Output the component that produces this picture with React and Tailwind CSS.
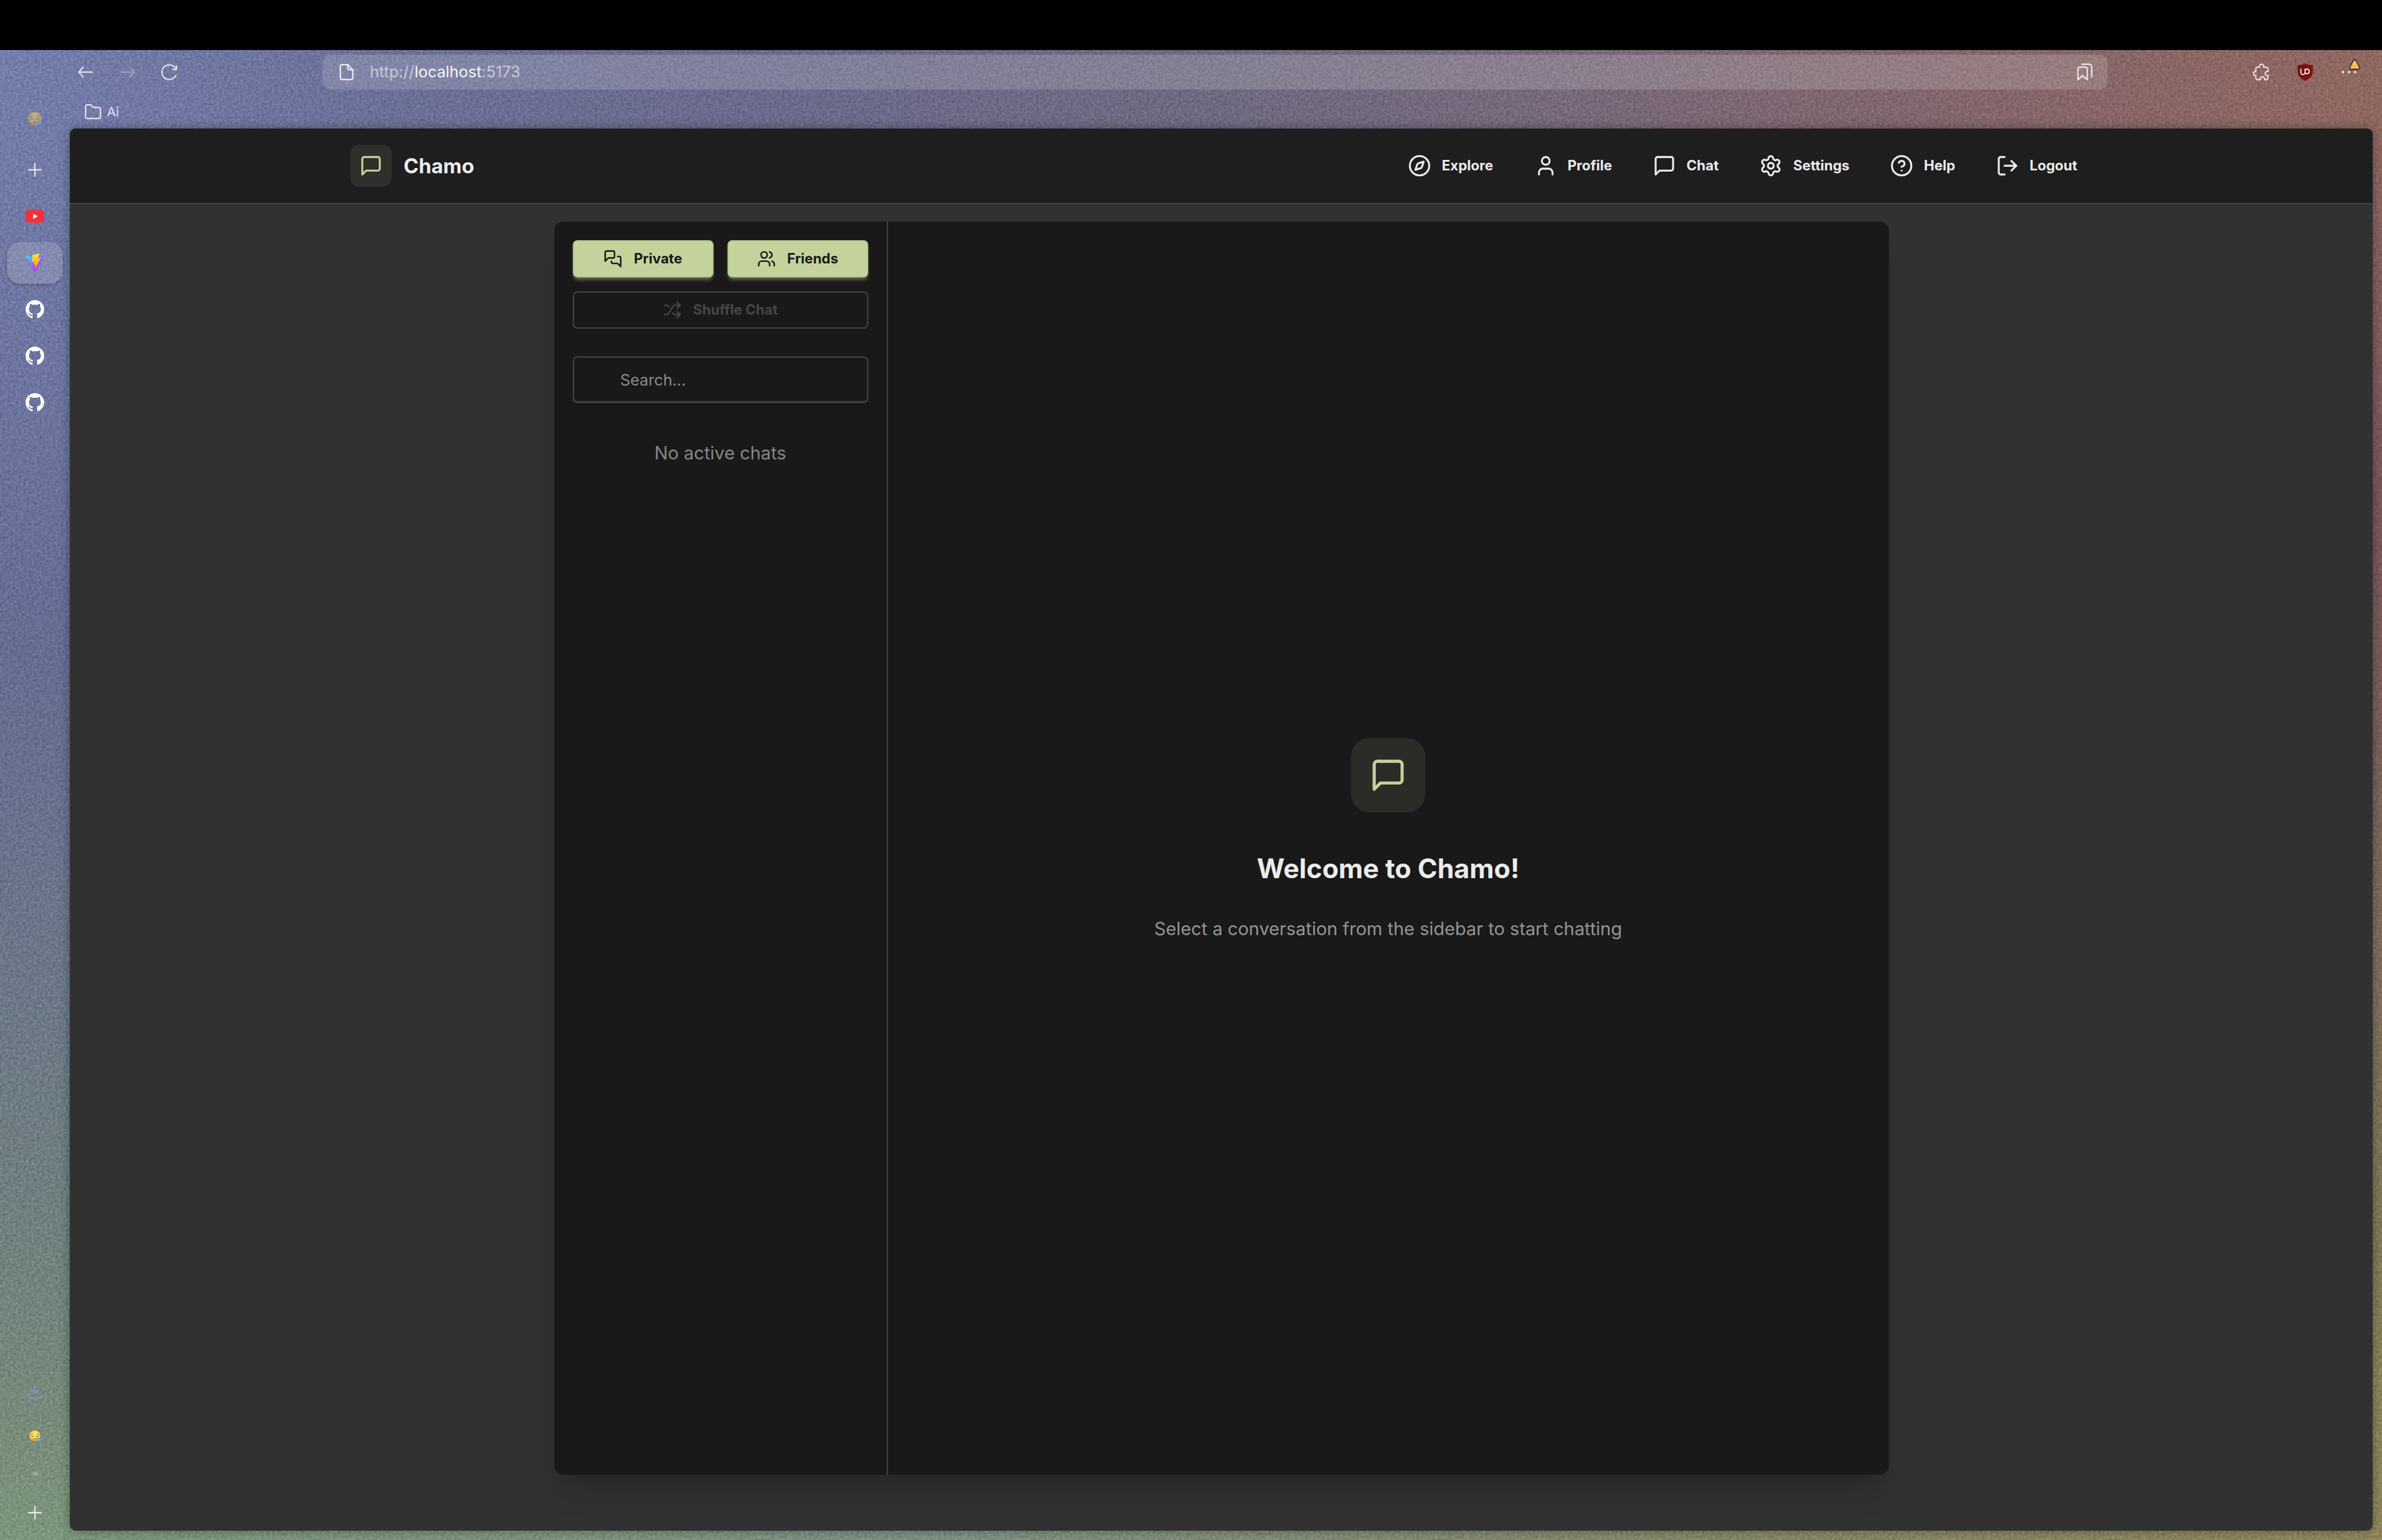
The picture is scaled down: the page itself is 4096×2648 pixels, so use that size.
import { CircleQuestionMark, Compass, LogOut, Settings, Shuffle, User, Users } from "lucide-react";

const line = { fill: "none", stroke: "currentColor", strokeLinecap: "round", strokeLinejoin: "round" };

function Bubble({ className }) {
  return (
    <svg viewBox="0 0 24 24" className={className} strokeWidth="2" {...line} aria-hidden="true">
      <path d="M21 15a2 2 0 0 1-2 2H7l-4 4V5a2 2 0 0 1 2-2h14a2 2 0 0 1 2 2z" />
    </svg>
  );
}

function Bubbles({ className }) {
  return (
    <svg viewBox="0 0 24 24" className={className} strokeWidth="2" {...line} aria-hidden="true">
      <path d="M14 9a2 2 0 0 1-2 2H6l-4 4V4a2 2 0 0 1 2-2h8a2 2 0 0 1 2 2z" />
      <path d="M18 9h2a2 2 0 0 1 2 2v11l-4-4h-6a2 2 0 0 1-2-2v-1" />
    </svg>
  );
}

function Backdrop() {
  return (
    <div className="absolute inset-0 -z-10" aria-hidden="true">
      <div className="absolute inset-0 bg-[linear-gradient(90deg,#747dab_0%,#6b7098_16%,#6a6a8a_33%,#6e6980_50%,#77687a_66%,#80666d_80%,#8c6662_95%,#8f6860_100%)]" />
      <div className="absolute inset-y-0 left-0 w-40 bg-[linear-gradient(180deg,#747dab_0%,#6c749f_25%,#656c92_42%,#6a7589_60%,#70807f_80%,#778a79_92%,#7c957b_100%)] [mask-image:linear-gradient(180deg,transparent_4%,black_16%)]" />
      <div className="absolute inset-y-0 right-0 w-10 bg-[linear-gradient(180deg,#8f6860_0%,#85605f_15%,#785558_33%,#78605a_48%,#7d6c5b_62%,#7d7656_78%,#878258_90%,#8d8459_100%)] [mask-image:linear-gradient(180deg,transparent_4%,black_16%)]" />
      <div className="absolute inset-x-0 bottom-0 h-5 bg-[linear-gradient(90deg,#7c957b_0%,#7d9080_40%,#84876a_70%,#8d8459_100%)]" />
      <svg className="absolute inset-0 size-full opacity-15 mix-blend-overlay">
        <filter id="grain" x="0" y="0" width="100%" height="100%" colorInterpolationFilters="sRGB">
          <feTurbulence type="fractalNoise" baseFrequency="0.22" numOctaves="2" seed="4" />
          <feColorMatrix values="1.5 0 0 0 -0.25  1.5 0 0 0 -0.25  1.5 0 0 0 -0.25  0 0 0 0 1" />
        </filter>
        <rect width="100%" height="100%" filter="url(#grain)" />
      </svg>
    </div>
  );
}

function SadFace({ className }) {
  return (
    <svg viewBox="0 0 24 24" className={className} aria-hidden="true">
      <defs>
        <radialGradient id="face" cx="0.5" cy="0.35" r="0.65">
          <stop offset="0" stopColor="#fff07a" />
          <stop offset="0.65" stopColor="#f8cf45" />
          <stop offset="1" stopColor="#dd8a2b" />
        </radialGradient>
      </defs>
      <circle cx="12" cy="12" r="11.5" fill="url(#face)" />
      <g fill="none" stroke="#7a4a1c" strokeWidth="1.2" strokeLinecap="round">
        <path d="M5 12.2c1.2 1.2 3.4 1.2 4.6 0M14.4 12.2c1.2 1.2 3.4 1.2 4.6 0" />
        <path d="M3.8 9c1.6-.1 2.8-.7 3.6-1.8M20.2 9c-1.6-.1-2.8-.7-3.6-1.8" />
        <path d="M8.6 18.4c1.8-1.2 4.4-1.2 6 0" />
      </g>
      <path d="M15 17c2-2.4 7.500-2 8 1.500.4 3-2 5-4.500 4.500-3-.6-4.300-3-3.500-6z" fill="#5fb6ee" />
    </svg>
  );
}

function YouTubeMark() {
  return (
    <svg viewBox="0 0 32 22" className="w-8" aria-hidden="true">
      <rect width="32" height="22" rx="5" fill="#ee333e" />
      <path d="M13 6.500v9l8-4.500z" fill="#fff" />
    </svg>
  );
}

function ViteMark() {
  return (
    <svg viewBox="0 0 256 257" className="w-8" aria-hidden="true">
      <defs>
        <linearGradient id="viteA" x1="-.828%" x2="57.636%" y1="7.652%" y2="78.411%">
          <stop offset="0%" stopColor="#41D1FF" />
          <stop offset="100%" stopColor="#BD34FE" />
        </linearGradient>
        <linearGradient id="viteB" x1="43.376%" x2="50.316%" y1="2.242%" y2="89.030%">
          <stop offset="0%" stopColor="#FFEA83" />
          <stop offset="8.333%" stopColor="#FFDD35" />
          <stop offset="100%" stopColor="#FFA800" />
        </linearGradient>
      </defs>
      <path fill="url(#viteA)" d="M255.153 37.938L134.897 252.976c-2.483 4.440-8.862 4.466-11.382.048L.875 37.958c-2.746-4.814 1.371-10.646 6.827-9.670l120.385 21.517a6.537 6.537 0 0 0 2.322-.004l117.867-21.483c5.438-.991 9.574 4.796 6.877 9.620Z" />
      <path fill="url(#viteB)" d="M185.432.063L96.440 17.501a3.268 3.268 0 0 0-2.634 3.014l-5.474 92.456a3.268 3.268 0 0 0 3.997 3.378l24.777-5.718c2.318-.535 4.413 1.507 3.936 3.838l-7.361 36.047c-.495 2.426 1.782 4.500 4.151 3.780l15.304-4.649c2.372-.720 4.652 1.360 4.150 3.788l-11.698 56.621c-.732 3.542 3.979 5.473 5.943 2.437l1.313-2.028l72.516-144.720c1.215-2.423-.880-5.186-3.540-4.672l-25.505 4.922c-2.396.462-4.435-1.770-3.759-4.114l16.646-57.705c.677-2.350-1.370-4.583-3.769-4.113Z" />
    </svg>
  );
}

function GitHubMark() {
  return (
    <svg viewBox="0 0 16 16" className="w-8 text-white" fill="currentColor" aria-hidden="true">
      <path d="M8 0C3.580 0 0 3.580 0 8c0 3.540 2.290 6.530 5.470 7.590.4.070.550-.170.550-.380 0-.190-.010-.820-.010-1.490-2.010.370-2.530-.490-2.690-.940-.090-.230-.480-.940-.820-1.130-.280-.150-.680-.520-.010-.530.630-.010 1.080.580 1.230.820.720 1.210 1.870.870 2.330.660.070-.520.280-.870.510-1.070-1.780-.2-3.640-.890-3.640-3.950 0-.870.310-1.590.820-2.150-.080-.2-.360-1.020.080-2.120 0 0 .670-.210 2.200.820.640-.180 1.320-.270 2-.270s1.360.090 2 .270c1.530-1.040 2.200-.820 2.200-.820.440 1.100.160 1.920.080 2.120.510.560.820 1.270.820 2.150 0 3.070-1.870 3.750-3.650 3.950.290.250.540.730.540 1.480 0 1.070-.010 1.930-.010 2.200 0 .210.150.460.550.380A8.010 8.010 0 0 0 16 8c0-4.420-3.580-8-8-8z" />
    </svg>
  );
}

function Plus() {
  return (
    <svg viewBox="0 0 24 24" className="w-6" strokeWidth="2.4" {...line} aria-hidden="true">
      <path d="M12 1.200v21.600M1.200 12h21.600" />
    </svg>
  );
}

function SideButton({ label, active, children }) {
  return (
    <button
      type="button"
      aria-label={label}
      className={
        active
          ? "flex h-[72px] w-24 items-center justify-center rounded-[22px] bg-white/15 shadow-[0_2px_5px_rgba(0,0,0,0.25)]"
          : "flex h-[72px] w-24 items-center justify-center rounded-[22px] text-white/80"
      }
    >
      {children}
    </button>
  );
}

function TabRail() {
  return (
    <aside className="flex w-[120px] shrink-0 flex-col items-center justify-between pt-[82px] pb-[11px]">
      <div className="flex flex-col items-center">
        <SideButton label="Current space">
          <SadFace className="w-6 opacity-50" />
        </SideButton>
        <div className="mt-4 flex flex-col gap-2">
          <SideButton label="New tab">
            <Plus />
          </SideButton>
          <SideButton label="YouTube">
            <YouTubeMark />
          </SideButton>
          <SideButton label="Chamo" active>
            <ViteMark />
          </SideButton>
          <SideButton label="GitHub">
            <GitHubMark />
          </SideButton>
          <SideButton label="GitHub">
            <GitHubMark />
          </SideButton>
          <SideButton label="GitHub">
            <GitHubMark />
          </SideButton>
        </div>
      </div>
      <div className="flex flex-col items-center">
        <SideButton label="Downloads">
          <svg viewBox="0 0 24 24" className="w-6 text-[#8890cf]" strokeWidth="2" {...line} aria-hidden="true">
            <path d="M12 1v13M5.500 8.500L12 15l6.500-6.500M1 16.500V20a3 3 0 0 0 3 3h16a3 3 0 0 0 3-3v-3.500" />
          </svg>
        </SideButton>
        <div className="mt-1 flex flex-col items-center">
          <SideButton label="Space one">
            <SadFace className="w-5" />
          </SideButton>
          <button type="button" aria-label="Space two" className="flex h-11 w-24 items-center justify-center opacity-60">
            <svg viewBox="0 0 16 24" className="w-4" aria-hidden="true">
              <path d="M2 2l1 6 3 7" stroke="#6d7a74" strokeWidth="1.500" fill="none" />
              <circle cx="2" cy="3" r="1.500" fill="#a9aeac" />
              <circle cx="8" cy="14" r="2.500" fill="#7e8a85" />
              <ellipse cx="9" cy="19" rx="4.500" ry="3.500" fill="#b3b9b6" />
              <path d="M13 21l2 1.500" stroke="#8c9691" strokeWidth="1.200" />
            </svg>
          </button>
        </div>
        <div className="mt-4">
          <SideButton label="New space">
            <Plus />
          </SideButton>
        </div>
      </div>
    </aside>
  );
}

function ToolButton({ label, children }) {
  return (
    <button type="button" aria-label={label} className="relative flex h-[60px] w-[54px] items-center justify-center text-white/75">
      {children}
    </button>
  );
}

function BrowserBar() {
  return (
    <div className="h-[135px] shrink-0 pt-2 text-white/75">
      <div className="flex items-center justify-between pr-[29px]">
        <div className="flex gap-[18px]">
          <ToolButton label="Back">
            <svg viewBox="0 0 26 20" className="w-[26px]" strokeWidth="2.400" {...line} aria-hidden="true">
              <path d="M1.200 10h23.600M9 1.500L1.200 10l7.800 8.500" />
            </svg>
          </ToolButton>
          <ToolButton label="Forward">
            <svg viewBox="0 0 26 20" className="w-[26px] opacity-40" strokeWidth="2.400" {...line} aria-hidden="true">
              <path d="M1.200 10h23.600M17 1.500l7.800 8.500-7.800 8.500" />
            </svg>
          </ToolButton>
          <ToolButton label="Reload">
            <svg viewBox="0 0 28 28" className="w-7" strokeWidth="2.400" {...line} aria-hidden="true">
              <path d="M25.500 19.500A12.600 12.600 0 1 1 25.300 8.500M26.600 3.500v6h-6.500" />
            </svg>
          </ToolButton>
        </div>
        <label className="mx-[236px] flex h-[60px] flex-1 items-center rounded-2xl bg-white/15 pr-[27px] pl-[30px]">
          <svg viewBox="0 0 24 28" className="w-6 text-white/90" strokeWidth="2.200" {...line} aria-hidden="true">
            <path d="M5 1.200h9l8.800 8.800v13.800a3 3 0 0 1-3 3H4.200a3 3 0 0 1-3-3V4.200a3 3 0 0 1 3-3zM14 1.200v5.800a3 3 0 0 0 3 3h5.800" />
          </svg>
          <span className="ml-7 flex-1 text-[27px] leading-9 text-white/55">
            http://<span className="text-white/95">localhost</span>:5173
          </span>
          <button type="button" aria-label="Bookmark this page" className="text-white/80">
            <svg viewBox="0 0 26 30" className="w-[26px]" strokeWidth="2.400" {...line} aria-hidden="true">
              <path d="M1.200 28V9.500a3 3 0 0 1 3-3h10a3 3 0 0 1 3 3V28l-8-7zM8 1.500h12.800a4 4 0 0 1 4 4V23" />
            </svg>
          </button>
        </label>
        <div className="flex gap-[22px]">
          <ToolButton label="Extensions">
            <svg viewBox="0 0 28 30" className="w-7" strokeWidth="2.400" {...line} aria-hidden="true">
              <path d="M8 6.500h3.500V5a3.500 3.500 0 0 1 7 0v1.500H23a3 3 0 0 1 3 3v4.500h-1.500a3.500 3.500 0 0 0 0 7H26v4a3 3 0 0 1-3 3h-3v-1.500a3.500 3.500 0 0 0-7 0V28H8a3 3 0 0 1-3-3v-4H4.500a3.500 3.500 0 0 1 0-7H5V9.500a3 3 0 0 1 3-3z" />
            </svg>
          </ToolButton>
          <ToolButton label="uBlock Origin">
            <svg viewBox="0 0 28 32" className="w-7" aria-hidden="true">
              <path d="M14 .8C10.500 3.200 5.500 4 .8 4v9.500C.8 22 5 27 14 31.200c9-4.200 13.200-9.200 13.200-17.700V4C22.500 4 17.500 3.200 14 .8z" fill="#79120e" stroke="#9c4a44" strokeWidth=".6" />
              <g fill="none" stroke="#fff" strokeWidth="1.800">
                <path d="M6.500 10v6.500a3.600 3.600 0 0 0 7.200 0V10" />
                <path d="M13.700 12.500a4 4 0 1 1 0 4.500" />
              </g>
            </svg>
          </ToolButton>
          <ToolButton label="Menu">
            <svg viewBox="0 0 26 4" className="w-[26px] text-white/90" fill="currentColor" aria-hidden="true">
              <circle cx="2" cy="2" r="2" />
              <circle cx="12.500" cy="2" r="2" />
              <circle cx="23" cy="2" r="2" />
            </svg>
            <svg viewBox="0 0 20 18" className="absolute top-2 right-2 w-5" aria-hidden="true">
              <path d="M10 1c1.200 0 2 .6 2.600 1.600l5.600 10.600c1 2-.2 3.800-2.200 3.800H4c-2 0-3.200-1.800-2.200-3.800L7.400 2.600C8 1.600 8.800 1 10 1z" fill="#f9bd5b" stroke="#2f2b36" strokeWidth="1.800" />
            </svg>
          </ToolButton>
        </div>
      </div>
      <button type="button" className="mt-[21px] ml-[26px] flex items-center gap-[10px] text-[22px] leading-[34px] text-white/80">
        <svg viewBox="0 0 28 26" className="w-7" strokeWidth="2.400" {...line} aria-hidden="true">
          <path d="M1.200 4.200a3 3 0 0 1 3-3h5.300a3 3 0 0 1 2.400 1.200l1.700 2.100A3 3 0 0 0 16 5.700h7.800a3 3 0 0 1 3 3V21.800a3 3 0 0 1-3 3H4.200a3 3 0 0 1-3-3z" />
        </svg>
        Ai
      </button>
    </div>
  );
}

const NAV = [
  { label: "Explore", Icon: Compass },
  { label: "Profile", Icon: User },
  { label: "Chat", Icon: Bubble },
  { label: "Settings", Icon: Settings },
  { label: "Help", Icon: CircleQuestionMark },
  { label: "Logout", Icon: LogOut },
];

function AppHeader() {
  return (
    <header className="border-b-2 border-[#464646] bg-[#1e1e1e]">
      <div className="mx-auto flex h-32 max-w-[2996px] items-center justify-between">
        <a href="#home" className="flex items-center gap-5">
          <span className="flex size-[72px] items-center justify-center rounded-2xl bg-[#2e302b]">
            <Bubble className="size-10 text-[#c4d39c]" />
          </span>
          <span className="text-[35px] leading-[48px] font-bold">Chamo</span>
        </a>
        <nav className="flex gap-[18px]">
          {NAV.map(({ label, Icon }) => (
            <a key={label} href={"#" + label.toLowerCase()} className="flex h-16 items-center gap-[18px] px-[26px] text-[24px] font-bold">
              <Icon className="size-10" />
              {label}
            </a>
          ))}
        </nav>
      </div>
    </header>
  );
}

const SOLID =
  "flex h-16 flex-1 items-center justify-center gap-5 rounded-lg border-2 border-[#b6c48f] bg-[#c4d39c] text-[24px] font-bold text-[#191919] shadow-[0_6px_6px_-2px_rgba(196,211,156,0.45)]";

function ChatPanel() {
  return (
    <div className="flex w-full max-w-[2295px] overflow-hidden rounded-2xl bg-[#191919]">
      <section className="w-[574px] shrink-0 border-r-2 border-[#464646] p-8">
        <div className="flex gap-6">
          <button type="button" className={SOLID}>
            <Bubbles className="size-8" />
            Private
          </button>
          <button type="button" className={SOLID}>
            <Users className="size-8" />
            Friends
          </button>
        </div>
        <button type="button" disabled className="mt-6 flex h-16 w-full items-center justify-center gap-5 rounded-lg border-2 border-[#464646] text-[24px] font-bold text-[#464646]">
          <Shuffle className="size-8" />
          Shuffle Chat
        </button>
        <input
          type="text"
          aria-label="Search chats"
          placeholder="Search..."
          className="mt-12 block h-20 w-full rounded-lg border-2 border-[#464646] bg-transparent pr-8 pl-20 text-[27px] text-[#e8e8e8] shadow-[inset_0_-3px_1px_-1px_#333333] outline-none placeholder:text-[#8b8b8b]"
        />
        <p className="mt-[62px] text-center text-[31px] leading-[48px] text-[#868686]">No active chats</p>
      </section>
      <section className="flex flex-1 flex-col items-center justify-center pb-7">
        <div className="flex size-32 items-center justify-center rounded-[32px] bg-[#2a2c27]">
          <Bubble className="size-16 text-[#c4d39c]" />
        </div>
        <h2 className="mt-16 text-[46px] leading-[64px] font-bold">Welcome to Chamo!</h2>
        <p className="mt-12 text-[31px] leading-[48px] text-[#949494]">Select a conversation from the sidebar to start chatting</p>
      </section>
    </div>
  );
}

export default function App() {
  return (
    <div className="relative isolate flex h-screen flex-col overflow-hidden font-[Inter,sans-serif]">
      <Backdrop />
      <div className="h-[86px] shrink-0 bg-black" />
      <div className="flex min-h-0 flex-1">
        <TabRail />
        <div className="flex min-w-0 flex-1 flex-col">
          <BrowserBar />
          <div className="mr-4 mb-4 flex min-h-0 flex-1 flex-col overflow-hidden rounded-[10px] bg-[#313131] text-[#ebebeb] shadow-[0_0_18px_rgba(0,0,0,0.35)]">
            <AppHeader />
            <main className="flex min-h-0 flex-1 justify-center pt-[30px] pb-24">
              <div className="flex w-full max-w-[2295px] rounded-2xl shadow-[0_40px_50px_-10px_rgba(0,0,0,0.12),0_16px_20px_-12px_rgba(0,0,0,0.1)]">
                <ChatPanel />
              </div>
            </main>
          </div>
        </div>
      </div>
    </div>
  );
}
